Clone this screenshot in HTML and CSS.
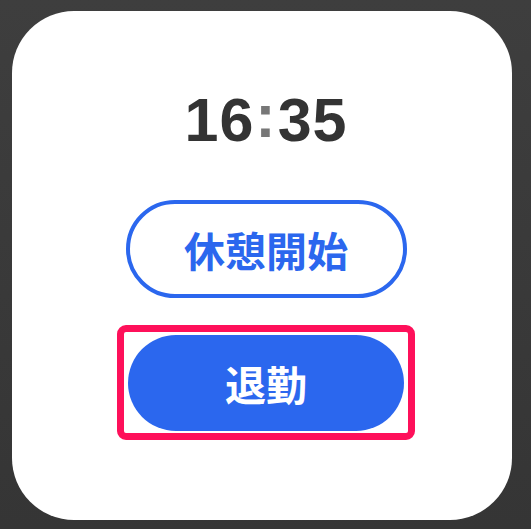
FILE: index.html
```html
<!DOCTYPE html>
<html>
<head lang="ja">
    <meta charset="UTF-8">
    <title>勤怠</title>
    <link rel="stylesheet" href="styles.css">
</head>
<body>
<div class="card">
    <div class="clock">16<span class="colon">:</span>35</div>
    <a href="javascript:;" class="btn btnOutline">休憩開始</a>
    <div class="focus">
        <a href="javascript:;" class="btn btnFill">退勤</a>
    </div>
</div>
</body>
</html>
```

FILE: styles.css
```css
html, body, div, a, span {
    margin: 0;
    padding: 0;
}

body {
    width: 531px;
    height: 529px;
    overflow: hidden;
    background: linear-gradient(#3e3e3e, #353535);
    font-family: "Liberation Sans", "Noto Sans CJK JP", sans-serif;
}

a {
    text-decoration: none;
}

.card {
    display: flex;
    flex-direction: column;
    align-items: center;
    box-sizing: border-box;
    width: 500px;
    height: 509px;
    margin: 11px 0 0 12px;
    padding: 79px 0 0 8px;
    background: #fff;
    border-radius: 62px;
}

.clock {
    height: 60px;
    font-size: 61px;
    line-height: 60px;
    font-weight: bold;
    color: #333;
    letter-spacing: 1px;
}

.clock .colon {
    position: relative;
    top: -4px;
    margin: 0 1px;
    color: #777;
}

.btn {
    display: flex;
    align-items: center;
    justify-content: center;
    box-sizing: border-box;
    font-family: "Noto Sans CJK JP", sans-serif;
    font-size: 41px;
    font-weight: bold;
    border-radius: 50px;
}

.btnOutline {
    width: 281px;
    height: 98px;
    margin-top: 50px;
    color: #2b67ee;
    border: 4px solid #2b67ee;
}

.focus {
    margin-top: 27px;
    padding: 3px 4px 2px 4px;
    border: 7px solid #fe105a;
    border-radius: 9px;
}

.btnFill {
    width: 276px;
    height: 96px;
    color: #fff;
    background: #2b67ee;
}
```
